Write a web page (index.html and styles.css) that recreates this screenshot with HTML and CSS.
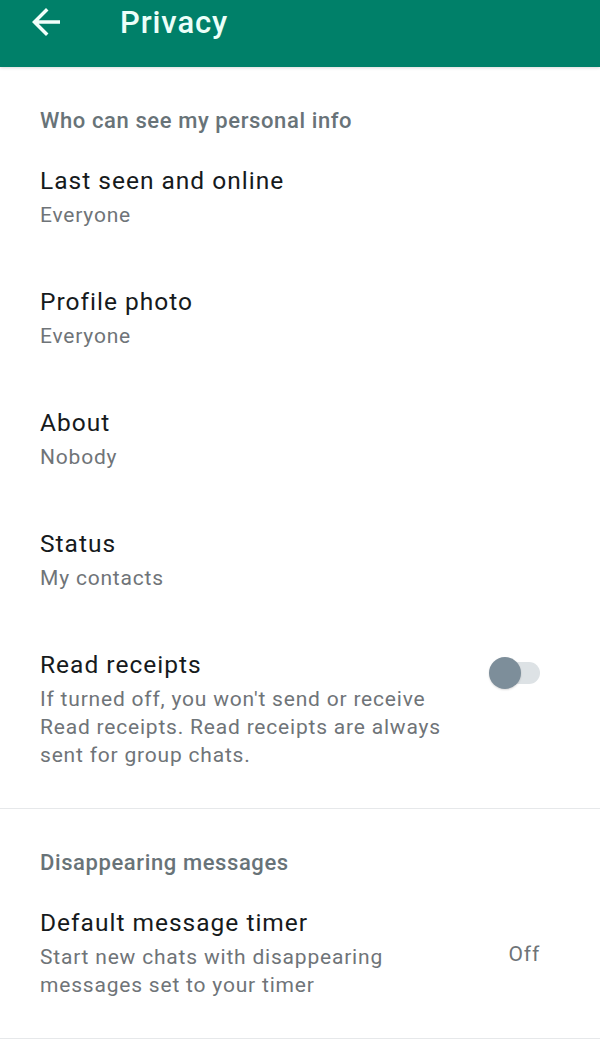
FILE: index.html
```html
<!DOCTYPE html>
<html lang="en">
<head>
    <meta charset="UTF-8">
    <meta name="viewport" content="width=device-width, initial-scale=1.0">
    <title>Privacy</title>
    <link rel="stylesheet" href="styles.css">
</head>
<body>
    <div class="topbar">
        <div class="topbar-row">
            <svg class="back" viewBox="0 0 24 24"><path d="M20 11H7.83l5.59-5.59L12 4l-8 8 8 8 1.41-1.41L7.83 13H20v-2z"/></svg>
            <h1>Privacy</h1>
        </div>
    </div>

    <div class="section">
        <p class="section-title">Who can see my personal info</p>

        <div class="item">
            <div class="item-text">
                <p class="item-title">Last seen and online</p>
                <p class="item-sub">Everyone</p>
            </div>
        </div>
        <div class="item">
            <div class="item-text">
                <p class="item-title">Profile photo</p>
                <p class="item-sub">Everyone</p>
            </div>
        </div>
        <div class="item">
            <div class="item-text">
                <p class="item-title">About</p>
                <p class="item-sub">Nobody</p>
            </div>
        </div>
        <div class="item">
            <div class="item-text">
                <p class="item-title">Status</p>
                <p class="item-sub">My contacts</p>
            </div>
        </div>
        <div class="item">
            <div class="item-text">
                <p class="item-title">Read receipts</p>
                <p class="item-sub">If turned off, you won't send or receive Read receipts. Read receipts are always sent for group chats.</p>
            </div>
            <div class="switch"><span class="thumb"></span></div>
        </div>
    </div>

    <div class="section">
        <p class="section-title">Disappearing messages</p>
        <div class="item centered">
            <div class="item-text">
                <p class="item-title">Default message timer</p>
                <p class="item-sub">Start new chats with disappearing messages set to your timer</p>
            </div>
            <span class="value">Off</span>
        </div>
    </div>
</body>
</html>
```

FILE: styles.css
```css
body {
    margin: 0;
    padding: 0;
    background: #ffffff;
    font-family: Roboto, "Noto Sans", sans-serif;
}
p {
    margin: 0;
}
.topbar {
    background: #008069;
    height: 67px;
    box-shadow: 0 1px 3px rgba(0, 0, 0, 0.15);
}
.topbar-row {
    display: flex;
    align-items: center;
    height: 44px;
    padding-left: 25px;
}
.back {
    width: 42px;
    height: 42px;
    fill: #f2fffb;
}
h1 {
    margin: 0 0 0 53px;
    font-size: 31px;
    font-weight: 500;
    color: #ecfff9;
    letter-spacing: 0.9px;
}
.section {
    padding: 40px 60px 10px 40px;
    border-bottom: 1px solid #e6e8ea;
}
.section-title {
    font-size: 22px;
    line-height: 28px;
    font-weight: 500;
    color: #687378;
    letter-spacing: 0.6px;
    margin-bottom: 2px;
}
.item {
    display: flex;
    justify-content: space-between;
    padding: 29px 0;
}
.item.centered {
    align-items: center;
}
.item-text {
    max-width: 428px;
}
.item-title {
    font-size: 24.5px;
    line-height: 30px;
    color: #161a1c;
    letter-spacing: 1px;
}
.item-sub {
    font-size: 21px;
    line-height: 28px;
    color: #6f7478;
    letter-spacing: 0.8px;
    margin-top: 5px;
}
.switch {
    position: relative;
    width: 50px;
    height: 22px;
    margin-top: 12px;
    border-radius: 11px;
    background: #dde2e5;
}
.thumb {
    position: absolute;
    left: -1px;
    top: -5px;
    width: 32px;
    height: 32px;
    border-radius: 50%;
    background: #7d8e9a;
    box-shadow: 0 1px 2px rgba(0, 0, 0, 0.15);
}
.value {
    font-size: 21px;
    color: #6f7478;
    letter-spacing: 0.8px;
}
```
